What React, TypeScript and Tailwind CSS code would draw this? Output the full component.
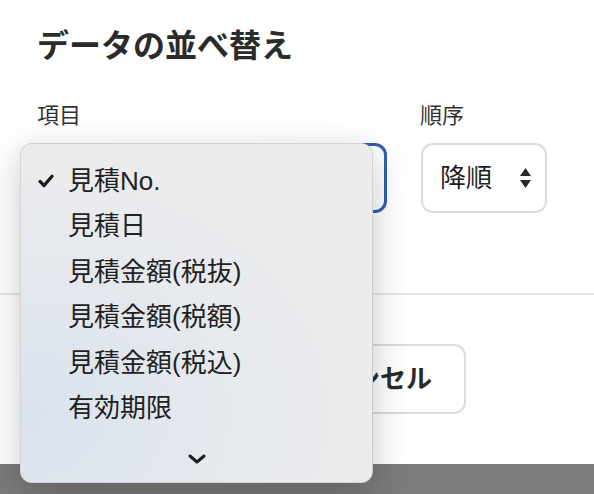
const items = ["見積No.", "見積日", "見積金額(税抜)", "見積金額(税額)", "見積金額(税込)", "有効期限"];

const font = { fontFamily: '"Liberation Sans", "Noto Sans CJK JP", sans-serif' };

function SortMenu() {
  return (
    <div className="absolute left-[20px] top-[143px] flex h-[340px] w-[353px] flex-col rounded-[12px] border border-black/10 bg-[radial-gradient(ellipse_at_0%_80%,#d8e2ee_0%,#e4e8ee_35%,#ececec_75%)] pt-[14px] shadow-[0_10px_36px_rgba(0,0,0,0.22)]">
      {items.map((item, i) => (
        <div key={item} className="flex h-[45.5px] items-center pl-[17px] text-[26px] leading-none text-[#222]">
          <span className="flex w-[16px] shrink-0 items-center justify-center">
            {i === 0 && (
              <svg className="h-[14px] w-[16px] shrink-0" viewBox="0 0 16 14" fill="none">
                <path d="M2 7.4 L6 11.6 L14 2.2" stroke="#1a1a1a" strokeWidth="3.2" strokeLinecap="round" strokeLinejoin="round" />
              </svg>
            )}
          </span>
          <span className="ml-[14px]">{item}</span>
        </div>
      ))}
      <div className="flex flex-1 items-end justify-center pb-[18px]">
        <svg width="18" height="10" viewBox="0 0 18 10" fill="none">
          <path d="M2 2 L9 8 L16 2" stroke="#1f1f1f" strokeWidth="3" strokeLinecap="round" strokeLinejoin="round" />
        </svg>
      </div>
    </div>
  );
}

export default function App() {
  return (
    <div className="relative flex h-[494px] w-[594px] flex-col overflow-hidden bg-white" style={font}>
      <div className="px-[37px] pt-[28px]">
        <h2 className="text-[32px] font-bold leading-[36px] text-[#2b2b2b]">データの並べ替え</h2>
        <div className="mt-[40px] flex gap-[34px]">
          <div className="flex flex-col">
            <span className="text-[22px] leading-[24px] text-[#333]">項目</span>
            <div className="mt-[15px] h-[70px] w-[350px] rounded-[12px] border-[3px] border-[#2f5fb3] bg-white" />
          </div>
          <div className="flex flex-col">
            <span className="-ml-px text-[22px] leading-[24px] text-[#333]">順序</span>
            <div className="mt-[15px] flex h-[70px] w-[126px] items-center justify-between rounded-[12px] border-2 border-[#dcdcdc] bg-white pl-[17px] pr-[13px]">
              <span className="text-[26px] leading-none text-[#1f1f1f]">降順</span>
              <svg width="13" height="22" viewBox="0 0 13 22" fill="#2a2a2a">
                <path d="M6.5 1 L12 9 L1 9 Z" />
                <path d="M1 13 L12 13 L6.5 21 Z" />
              </svg>
            </div>
          </div>
        </div>
      </div>
      <div className="mt-[80px] h-[2px] bg-[#e6e6e6]" />
      <div className="flex pl-[268px] pt-[49px]">
        <button className="flex h-[70px] w-[198px] items-center justify-center rounded-[12px] border-2 border-[#dcdcdc] bg-white text-[26px] font-bold text-[#2b2b2b]">
          キャンセル
        </button>
      </div>
      <div className="mt-auto h-[30px] bg-[#7b7b7b]" />
      <SortMenu />
    </div>
  );
}
